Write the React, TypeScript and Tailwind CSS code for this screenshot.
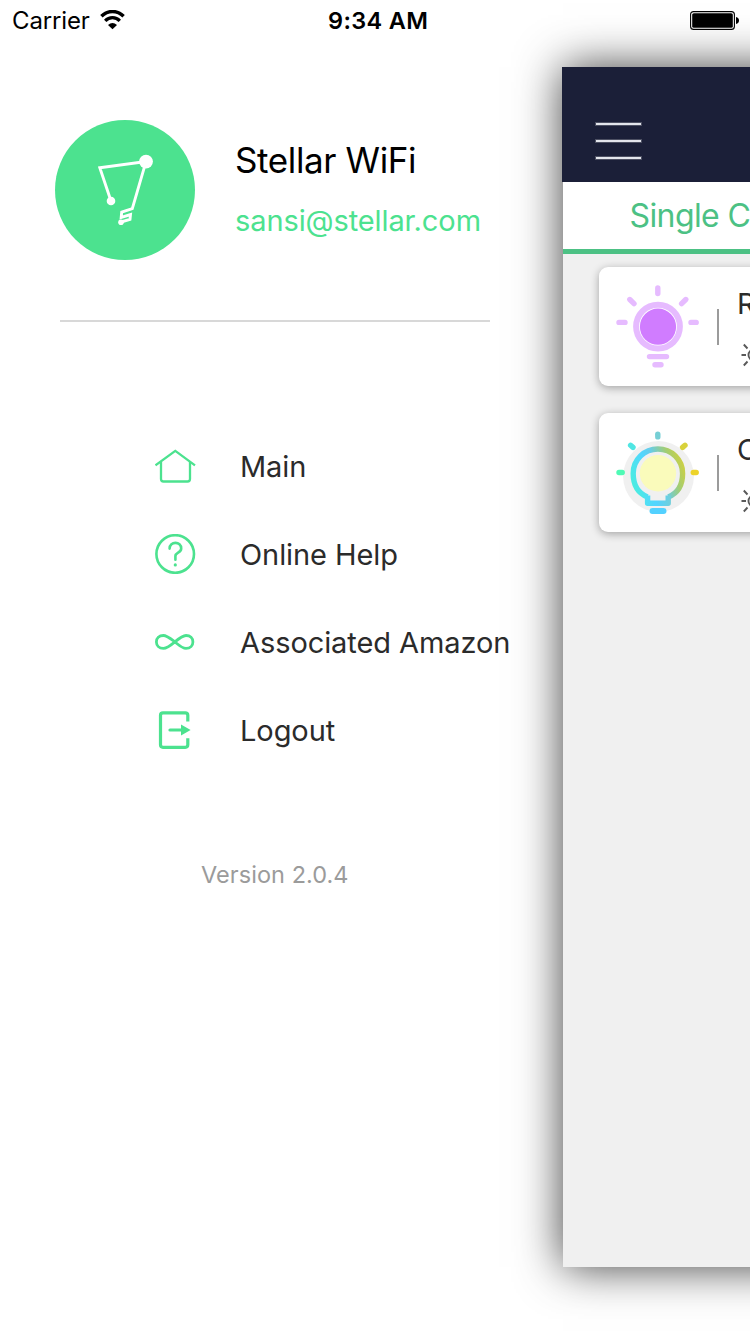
import type { ReactNode } from "react";

const GREEN = "#4ce28f";

function WifiIcon() {
  return (
    <svg className="ml-[10px] mt-[10px] h-[20px] w-[26px]" viewBox="0 0 26 20" fill="none" stroke="#000">
      <path d="M1.4 6.2 C7.7 -0.1 17.3 -0.1 23.6 6.2" strokeWidth="3.4" />
      <path d="M5.2 10.8 C9.2 6.6 15.8 6.6 19.8 10.8" strokeWidth="3.3" />
      <path d="M8 15 Q12.5 11 17 15 L12.5 19.2 Z" fill="#000" stroke="none" />
    </svg>
  );
}

function BatteryIcon() {
  return (
    <svg className="mt-[10px] h-[20px] w-[50px]" viewBox="0 0 50 20">
      <rect x="0.6" y="1.6" width="43.8" height="17.8" rx="3" fill="#fff" stroke="#000" strokeWidth="1.1" />
      <rect x="2.2" y="3.2" width="40.6" height="14.6" rx="1.6" fill="#000" />
      <path d="M46 7 q3 0.6 3 3.5 t-3 3.5z" fill="#000" />
    </svg>
  );
}

function LogoIcon() {
  return (
    <svg className="h-[140px] w-[140px]" viewBox="0 0 140 140" fill="none" stroke="#fff">
      <circle cx="70" cy="70" r="70" fill={GREEN} stroke="none" />
      <path d="M56 81 L44.8 47.8 L91 41.6 L77.3 88.6 L66.7 92 L66.2 97.5 L75.5 94.5 L75 99.3 L66 102" strokeWidth="2.9" />
      <circle cx="91" cy="41.6" r="6.9" fill="#fff" stroke="none" />
      <circle cx="56" cy="81" r="4.3" fill="#fff" stroke="none" />
      <circle cx="66" cy="102.3" r="2.8" fill="#fff" stroke="none" />
    </svg>
  );
}

function HomeIcon() {
  return (
    <g strokeWidth="2.3">
      <path d="M0.5 19.4 L20.3 4.9 L40 19.4" />
      <path d="M6 16 V33 Q6 35.5 8.5 35.5 H32.5 Q35 35.5 35 33 V16" />
    </g>
  );
}

function HelpIcon() {
  return (
    <g strokeWidth="2.6">
      <circle cx="20.2" cy="20" r="18.8" />
      <path d="M14.6 14.6 C14.6 6.9 26.4 7 26.2 14.6 C26.1 18.8 20.4 18.4 20.4 22 V25.8" strokeLinecap="round" />
      <circle cx="20.3" cy="30.9" r="1.6" fill={GREEN} stroke="none" />
    </g>
  );
}

function InfinityIcon() {
  return (
    <path
      d="M19.9 19.9 C14 15.5 11.5 13.5 8.4 13.5 C4.1 13.5 1.4 16.3 1.4 19.9 C1.4 23.5 4.1 26.4 8.4 26.4 C12 26.4 15.4 23.7 19.9 19.9 C24.4 16.1 27.5 13.5 31 13.5 C35.3 13.5 37.9 16.3 37.9 19.9 C37.9 23.5 35.3 26.4 31 26.4 C27.3 26.4 25 24.1 19.9 19.9Z"
      strokeWidth="2.8"
    />
  );
}

function LogoutIcon() {
  return (
    <g strokeWidth="3.2">
      <path d="M32.8 11.5 V5.3 Q32.8 2.8 30.3 2.8 H8 Q5.5 2.8 5.5 5.3 V34.8 Q5.5 37.3 8 37.3 H30.3 Q32.8 37.3 32.8 34.8 V28.2" />
      <path d="M15 20 H27" strokeLinecap="round" />
      <path d="M26 14.5 L35.6 20 L26 25.5 Z" fill={GREEN} stroke="none" />
    </g>
  );
}

function MenuRow({ icon, children }: { icon: ReactNode; children: ReactNode }) {
  return (
    <li className="flex h-[88px] items-center">
      <svg className="mb-[2px] h-[40px] w-[41px] shrink-0" viewBox="0 0 41 40" fill="none" stroke={GREEN}>
        {icon}
      </svg>
      <span className="ml-[44px] text-[29px] leading-[40px] tracking-[-0.08px] text-[#2b2b2b]">{children}</span>
    </li>
  );
}

function PurpleBulb() {
  return (
    <svg className="mb-[1px] ml-[17px] h-[90px] w-[84px] shrink-0" viewBox="0 0 84 90" fill="none" stroke="#e6bbff" strokeWidth="5.4" strokeLinecap="round">
      <path d="M41.8 6.9 V12.5 M13.8 18.5 L18 22.6 M69.8 18.5 L65.6 22.6 M3 41.4 H9 M75 41.4 H80.2" />
      <circle cx="42" cy="45.6" r="21.9" strokeWidth="6" />
      <circle cx="42" cy="45.7" r="18.1" fill="#d07cff" stroke="none" />
      <path d="M33.5 75.6 H50.5 M39 83.8 H45" />
    </svg>
  );
}

function ColorBulb() {
  return (
    <svg className="ml-[17px] mt-[4px] h-[90px] w-[84px] shrink-0" viewBox="0 0 84 90" fill="none" strokeWidth="5.4" strokeLinecap="round">
      <defs>
        <linearGradient id="ring" gradientUnits="userSpaceOnUse" x1="15" y1="55" x2="69" y2="36">
          <stop offset="0" stopColor="#49eede" />
          <stop offset="0.36" stopColor="#52d6ff" />
          <stop offset="0.52" stopColor="#67cce8" />
          <stop offset="0.78" stopColor="#a3cd72" />
          <stop offset="1" stopColor="#cdd043" />
        </linearGradient>
        <linearGradient id="base" gradientUnits="userSpaceOnUse" x1="29" y1="0" x2="55" y2="0">
          <stop offset="0" stopColor="#50e0f2" />
          <stop offset="0.45" stopColor="#53d4ff" />
          <stop offset="1" stopColor="#72ceda" />
        </linearGradient>
      </defs>
      <circle cx="42.5" cy="46.5" r="35.4" fill="#f0f0f0" />
      <circle cx="42" cy="43.3" r="18.2" fill="#fafbbb" />
      <path d="M31.5 67 C20.5 62.5 17.2 53.5 17.2 43.5 C17.2 29.5 28.3 19 41.9 19 C55.5 19 66.6 29.5 66.6 43.5 C66.6 53.5 63.3 62.5 52.3 67" stroke="url(#ring)" strokeLinecap="butt" />
      <path d="M31.6 65.5 V73.2 H52.2 V65.5" stroke="url(#base)" strokeLinecap="butt" strokeLinejoin="round" />
      <path d="M36.5 80.9 H47.5" stroke="#53d1ff" strokeWidth="6" />
      <path d="M41.8 4.3 V6.9" stroke="#76cfd5" />
      <path d="M14.6 15.3 L17 17.4" stroke="#50e6e3" />
      <path d="M69 15.3 L66.6 17.4" stroke="#d8d23b" />
      <path d="M3 42.5 H6.2" stroke="#4ffab5" />
      <path d="M77.3 42.5 H80.2" stroke="#edd329" />
    </svg>
  );
}

function SunIcon() {
  return (
    <svg className="h-[26px] w-[26px]" viewBox="0 0 26 26" fill="none" stroke="#595959" strokeWidth="1.9">
      <circle cx="13" cy="13" r="5.5" />
      <path d="M0.5 13 H5 M2.8 2.5 L6.5 6.5 M2.8 23.5 L6.5 19.5 M21 13 H26 M23.5 2.5 L19.5 6.5 M23.5 23.5 L19.5 19.5 M13 0 V4 M13 22 V26" />
    </svg>
  );
}

function DeviceCard({ bulb, name }: { bulb: ReactNode; name: string }) {
  return (
    <div className="flex h-[119px] w-[680px] items-center rounded-[9px] bg-white shadow-[0_2px_8px_rgba(0,0,0,0.32)]">
      {bulb}
      <div className="ml-[17px] h-[36px] w-[2px] shrink-0 bg-[#9b9b9b]" />
      <div className="ml-[18px] flex h-full flex-col pt-[17px]">
        <span className="h-[40px] text-[29px] leading-[40px] text-[#2b2b2b]">{name}</span>
        <div className="ml-[4px] mt-[18px]">
          <SunIcon />
        </div>
      </div>
    </div>
  );
}

export default function App() {
  return (
    <div className="relative flex h-[1334px] w-[750px] overflow-hidden whitespace-nowrap bg-white font-['Inter',sans-serif]">
      <aside className="flex w-[563px] shrink-0 flex-col">
        <div className="mt-[120px] flex h-[140px] pl-[55px]">
          <LogoIcon />
          <div className="ml-[40px] flex flex-col pt-[15px]">
            <div className="h-[50px] text-[35px] leading-[50px] tracking-[-0.38px] text-black">Stellar WiFi</div>
            <div className="mt-[16px] h-[40px] text-[29px] leading-[40px] tracking-[-0.1px] text-[#4ce28f]">sansi@stellar.com</div>
          </div>
        </div>
        <div className="ml-[60px] mt-[60px] h-[2px] w-[430px] bg-[#d8d8d8]" />
        <ul className="ml-[155px] mt-[101px]">
          <MenuRow icon={<HomeIcon />}>Main</MenuRow>
          <MenuRow icon={<HelpIcon />}>Online Help</MenuRow>
          <MenuRow icon={<InfinityIcon />}>Associated Amazon</MenuRow>
          <MenuRow icon={<LogoutIcon />}>Logout</MenuRow>
        </ul>
        <div className="ml-[201px] mt-[80px] text-[23.5px] leading-[40px] tracking-[0.05px] text-[#9b9b9b]">Version 2.0.4</div>
      </aside>

      <main className="mt-[67px] h-[1200px] w-[750px] shrink-0 shadow-[0_0_43px_rgba(0,0,0,0.76)]">
        <header className="-ml-px flex h-[115px] flex-col gap-[15px] bg-[#1b1f38] pl-[34px] pt-[56px]">
          <div className="h-[2px] w-[45px] bg-[#e3e5ec] shadow-[0_0_0_1px_rgba(255,255,255,0.22)]" />
          <div className="h-[2px] w-[45px] bg-[#e3e5ec] shadow-[0_0_0_1px_rgba(255,255,255,0.22)]" />
          <div className="h-[2px] w-[45px] bg-[#e3e5ec] shadow-[0_0_0_1px_rgba(255,255,255,0.22)]" />
        </header>
        <div className="flex h-[1085px] flex-col bg-[#f0f0f0]">
          <div className="h-[72px] border-b-[5px] border-[#4cc184] bg-white pl-[66.5px] pt-[13px] text-[32px] leading-[42px] tracking-[-0.6px] text-[#4cc184]">
            Single C
          </div>
          <div className="flex flex-col gap-[27px] pl-[36px] pt-[13px]">
            <DeviceCard bulb={<PurpleBulb />} name="R" />
            <DeviceCard bulb={<ColorBulb />} name="C" />
          </div>
        </div>
      </main>

      <div className="absolute inset-x-0 top-0 flex h-[40px]">
        <div className="flex w-[328px] pl-[12px]">
          <span className="text-[24px] leading-[41px] tracking-[-0.15px]">Carrier</span>
          <WifiIcon />
        </div>
        <span className="text-[23.5px] font-semibold leading-[41px] tracking-[0.35px]">9:34 AM</span>
        <div className="flex flex-1 justify-end pr-[10px]">
          <BatteryIcon />
        </div>
      </div>
    </div>
  );
}
